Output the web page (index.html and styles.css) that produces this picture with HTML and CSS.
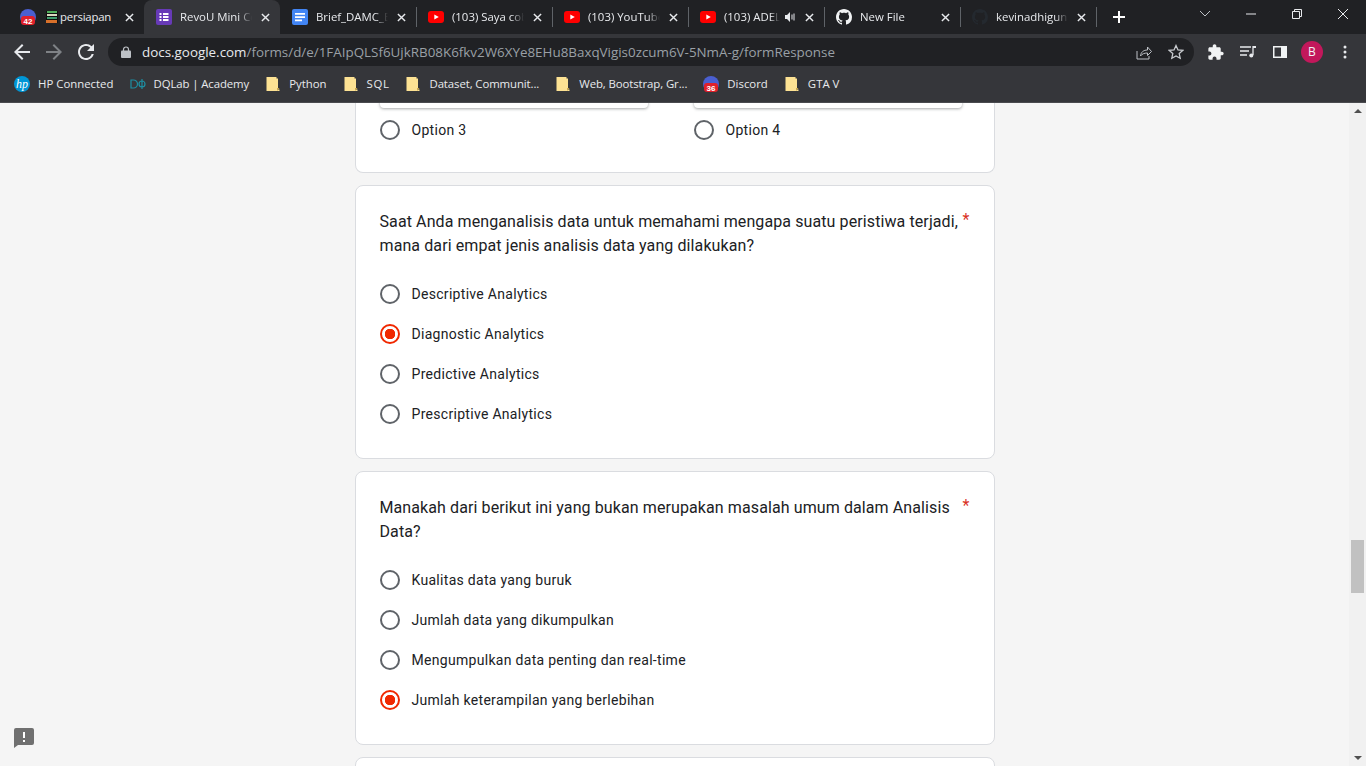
FILE: index.html
```html
<!DOCTYPE html>
<html>
<head>
    <title>RevoU Mini Course</title>
    <link rel="stylesheet" href="styles.css">
</head>
<body>
    <svg class="defs" width="0" height="0">
        <symbol id="ico-close" viewBox="0 0 10 10"><path d="M1 1l8 8M9 1L1 9" stroke="#e8eaed" stroke-width="1.6" fill="none"/></symbol>
        <symbol id="ico-yt" viewBox="0 0 16 12"><rect width="16" height="12" rx="3" fill="#f00"/><path d="M6.3 3.4v5.2L10.8 6z" fill="#fff"/></symbol>
        <symbol id="ico-gh" viewBox="0 0 16 16"><path d="M8 0C3.58 0 0 3.58 0 8c0 3.54 2.29 6.53 5.47 7.59.4.07.55-.17.55-.38 0-.19-.01-.82-.01-1.49-2.01.37-2.53-.49-2.69-.94-.09-.23-.48-.94-.82-1.13-.28-.15-.68-.52-.01-.53.63-.01 1.08.58 1.23.82.72 1.21 1.87.87 2.33.66.07-.52.28-.87.51-1.07-1.78-.2-3.64-.89-3.64-3.95 0-.87.31-1.59.82-2.15-.08-.2-.36-1.02.08-2.12 0 0 .67-.21 2.2.82.64-.18 1.32-.27 2-.27.68 0 1.36.09 2 .27 1.53-1.04 2.2-.82 2.2-.82.44 1.1.16 1.92.08 2.12.51.56.82 1.27.82 2.15 0 3.07-1.87 3.75-3.65 3.95.29.25.54.73.54 1.48 0 1.07-.01 1.93-.01 2.2 0 .21.15.46.55.38A8.013 8.013 0 0016 8c0-4.42-3.58-8-8-8z"/></symbol>
        <symbol id="ico-folder" viewBox="0 0 16 16"><path d="M1.500 1h10v1.500H13v11h1.500V15h-13z" fill="#fde293"/><path d="M12 12h2.500L12 15z" fill="#c9a84f"/></symbol>
    </svg>

    <div class="tabstrip">
        <div class="tab first">
            <svg class="fav" viewBox="0 0 16 16"><circle cx="8" cy="8" r="8" fill="#4a5fd0"/><rect x="1" y="7" width="14" height="9" rx="3" fill="#e0202a"/><text x="8" y="15" class="badge">42</text></svg>
            <svg class="fav-small" viewBox="0 0 12 12"><rect width="12" height="12" fill="#111"/><rect x="1" y="0" width="10" height="2" fill="#4fae5b"/><rect x="1" y="3" width="10" height="2" fill="#d9d9c0"/><rect x="1" y="6" width="10" height="2" fill="#3f9c6e"/><rect y="9" width="11" height="3" fill="#d8702a"/></svg>
            <span class="title">persiapan</span>
            <svg class="close"><use href="#ico-close"/></svg>
        </div>
        <div class="tab active">
            <svg class="fav" viewBox="0 0 16 16"><rect width="16" height="16" rx="2" fill="#673ab7"/><path d="M3.500 4h2v2h-2zM7 4h5.500v2H7zM3.500 7h2v2h-2zM7 7h5.500v2H7zM3.500 10h2v2h-2zM7 10h5.500v2H7z" fill="#fff"/></svg>
            <span class="title">RevoU Mini Course</span>
            <svg class="close"><use href="#ico-close"/></svg>
        </div>
        <div class="tab sep">
            <svg class="fav" viewBox="0 0 16 16"><rect width="16" height="16" rx="2" fill="#4285f4"/><path d="M3 4h10v1.800H3zM3 7.200h10V9H3zM3 10.400h7v1.800H3z" fill="#fff"/></svg>
            <span class="title">Brief_DAMC_Batch</span>
            <svg class="close"><use href="#ico-close"/></svg>
        </div>
        <div class="tab sep">
            <svg class="fav"><use href="#ico-yt" y="2" height="12" width="16"/></svg>
            <span class="title">(103) Saya coba</span>
            <svg class="close"><use href="#ico-close"/></svg>
        </div>
        <div class="tab sep">
            <svg class="fav"><use href="#ico-yt" y="2" height="12" width="16"/></svg>
            <span class="title">(103) YouTube</span>
            <svg class="close"><use href="#ico-close"/></svg>
        </div>
        <div class="tab sep">
            <svg class="fav"><use href="#ico-yt" y="2" height="12" width="16"/></svg>
            <span class="title">(103) ADELE</span>
            <svg class="audio" viewBox="0 0 12 12"><path d="M1 4h2l3-3v10L3 8H1z" fill="#e8eaed"/><path d="M8 3.500v5M10 2.500v7" stroke="#e8eaed" fill="none"/></svg>
            <svg class="close"><use href="#ico-close"/></svg>
        </div>
        <div class="tab sep">
            <svg class="fav gh-light"><use href="#ico-gh"/></svg>
            <span class="title">New File</span>
            <svg class="close"><use href="#ico-close"/></svg>
        </div>
        <div class="tab sep">
            <svg class="fav gh-dark"><use href="#ico-gh"/></svg>
            <span class="title">kevinadhigunawan</span>
            <svg class="close"><use href="#ico-close"/></svg>
        </div>
        <svg class="newtab" viewBox="0 0 12 12"><path d="M6 0v12M0 6h12" stroke="#fff" stroke-width="2"/></svg>
        <div class="winctl">
            <svg viewBox="0 0 46 16"><path d="M18 5l5 5 5-5" stroke="#bdc1c6" fill="none"/></svg>
            <svg viewBox="0 0 46 16"><path d="M18 8h10" stroke="#e8eaed" fill="none"/></svg>
            <svg viewBox="0 0 46 16"><path d="M18.500 5.500h7v7h-7zM20.500 5.500v-2h7v7h-2" stroke="#e8eaed" fill="none"/></svg>
            <svg viewBox="0 0 46 16"><path d="M18 3l10 10M28 3L18 13" stroke="#e8eaed" fill="none"/></svg>
        </div>
    </div>

    <div class="toolbar">
        <svg class="tool" viewBox="4 4 16 16"><path d="M20 11H7.830l5.590-5.590L12 4l-8 8 8 8 1.410-1.410L7.830 13H20v-2z" fill="#e8eaed"/></svg>
        <svg class="tool" viewBox="4 4 16 16"><path d="M12 4l-1.410 1.410L16.170 11H4v2h12.170l-5.580 5.590L12 20l8-8z" fill="#7f8286"/></svg>
        <svg class="tool" viewBox="4 4 16 16"><path d="M17.650 6.350A7.958 7.958 0 0012 4c-4.420 0-7.990 3.580-7.990 8s3.570 8 7.990 8c3.730 0 6.840-2.550 7.730-6h-2.080A5.990 5.990 0 0112 18c-3.310 0-6-2.690-6-6s2.690-6 6-6c1.660 0 3.140.690 4.220 1.780L13 11h7V4l-2.350 2.350z" fill="#e8eaed"/></svg>
        <div class="omnibox">
            <svg class="lock" viewBox="0 0 10 12"><path d="M2.500 5V3.500a2.500 2.500 0 0 1 5 0V5" stroke="#bdc1c6" stroke-width="1.200" fill="none"/><rect y="4.500" width="10" height="7.500" rx="1" fill="#bdc1c6"/></svg>
            <span class="url"><span class="host">docs.google.com</span>/forms/d/e/1FAIpQLSf6UjkRB08K6fkv2W6XYe8EHu8BaxqVigis0zcum6V-5NmA-g/formResponse</span>
            <svg class="omni-ico share" viewBox="0 0 16 16"><path d="M1 7v8h12v-3" stroke="#bdc1c6" fill="none"/><path d="M4.500 12c.5-4 3-6 7-6V3l4 4.500-4 4V9c-3 0-5.500.8-7 3z" stroke="#bdc1c6" fill="none"/></svg>
            <svg class="omni-ico star" viewBox="0 0 16 16"><path d="M8 1.500l2 4.400 4.800.5-3.600 3.200 1 4.700L8 11.900l-4.200 2.400 1-4.700L1.200 6.400 6 5.900z" stroke="#c8cbcf" stroke-width="1.300" fill="none"/></svg>
        </div>
        <svg class="tool" viewBox="1.500 0.500 22 22"><path d="M20.500 11H19V7c0-1.100-.9-2-2-2h-4V3.500C13 2.120 11.880 1 10.500 1S8 2.120 8 3.500V5H4c-1.100 0-1.990.9-1.990 2v3.800H3.500c1.490 0 2.700 1.210 2.700 2.700s-1.210 2.700-2.700 2.700H2V20c0 1.100.9 2 2 2h3.800v-1.500c0-1.490 1.210-2.700 2.700-2.700 1.490 0 2.700 1.210 2.700 2.700V22H17c1.100 0 2-.9 2-2v-4h1.500c1.380 0 2.500-1.120 2.500-2.500S21.880 11 20.500 11z" fill="#f1f3f4"/></svg>
        <svg class="tool" viewBox="0 0 16 16"><path d="M0 3h11M0 7h9M0 11h7" stroke="#e8eaed" stroke-width="1.300"/><path d="M13 2v9" stroke="#e8eaed" stroke-width="1.300"/><circle cx="11.300" cy="11.500" r="2" fill="#e8eaed"/><path d="M13 2h3v2h-3z" fill="#e8eaed"/></svg>
        <svg class="tool" viewBox="0 0 16 16"><rect x="1.750" y="2.750" width="12.500" height="10.500" stroke="#f1f3f4" stroke-width="1.500" fill="none"/><rect x="9" y="2" width="6" height="12" fill="#f1f3f4"/></svg>
        <div class="avatar">B</div>
        <svg class="tool dots" viewBox="0 0 4 14"><circle cx="2" cy="2" r="1.500" fill="#e8eaed"/><circle cx="2" cy="7" r="1.500" fill="#e8eaed"/><circle cx="2" cy="12" r="1.500" fill="#e8eaed"/></svg>
    </div>

    <div class="bookmarks">
        <div class="bm">
            <svg class="bm-ico" viewBox="0 0 16 16"><circle cx="8" cy="8" r="8" fill="#0096d6"/><text x="8" y="12" class="hp">hp</text></svg>
            <span>HP Connected</span>
        </div>
        <div class="bm">
            <svg class="bm-ico" viewBox="0 0 16 16"><path d="M1 4h2.500a4 4 0 0 1 0 8H1zM12 3v10M12 5a3 3 0 0 0 0 6 3 3 0 0 0 0-6z" stroke="#1d8fa3" stroke-width="1.200" fill="none"/></svg>
            <span class="tight">DQLab | Academy</span>
        </div>
        <div class="bm"><svg class="bm-ico"><use href="#ico-folder"/></svg><span>Python</span></div>
        <div class="bm"><svg class="bm-ico"><use href="#ico-folder"/></svg><span class="wide">SQL</span></div>
        <div class="bm"><svg class="bm-ico"><use href="#ico-folder"/></svg><span class="tight">Dataset, Communit...</span></div>
        <div class="bm"><svg class="bm-ico"><use href="#ico-folder"/></svg><span class="tight">Web, Bootstrap, Gr...</span></div>
        <div class="bm">
            <svg class="bm-ico" viewBox="0 0 16 16"><circle cx="8" cy="8" r="8" fill="#4a5fd0"/><rect x="1" y="7" width="14" height="9" rx="3" fill="#e0202a"/><text x="8" y="15" class="badge">36</text></svg>
            <span>Discord</span>
        </div>
        <div class="bm"><svg class="bm-ico"><use href="#ico-folder"/></svg><span>GTA V</span></div>
    </div>

    <div class="viewport">
        <div class="page">
            <div class="card cut">
                <div class="img-grid">
                    <div class="img-col">
                        <div class="img-tile"></div>
                        <div class="opt"><span class="radio"></span><span>Option 3</span></div>
                    </div>
                    <div class="img-col">
                        <div class="img-tile"></div>
                        <div class="opt"><span class="radio"></span><span>Option 4</span></div>
                    </div>
                </div>
            </div>

            <div class="card">
                <div class="question">
                    <div class="q-text">Saat Anda menganalisis data untuk memahami mengapa suatu peristiwa terjadi, mana dari empat jenis analisis data yang dilakukan?</div>
                    <span class="req">*</span>
                </div>
                <div class="opt"><span class="radio"></span><span>Descriptive Analytics</span></div>
                <div class="opt"><span class="radio on"></span><span>Diagnostic Analytics</span></div>
                <div class="opt"><span class="radio"></span><span>Predictive Analytics</span></div>
                <div class="opt"><span class="radio"></span><span>Prescriptive Analytics</span></div>
            </div>

            <div class="card">
                <div class="question">
                    <div class="q-text">Manakah dari berikut ini yang bukan merupakan masalah umum dalam Analisis Data?</div>
                    <span class="req">*</span>
                </div>
                <div class="opt"><span class="radio"></span><span>Kualitas data yang buruk</span></div>
                <div class="opt"><span class="radio"></span><span>Jumlah data yang dikumpulkan</span></div>
                <div class="opt"><span class="radio"></span><span>Mengumpulkan data penting dan real-time</span></div>
                <div class="opt"><span class="radio on"></span><span>Jumlah keterampilan yang berlebihan</span></div>
            </div>

            <div class="card"></div>
        </div>

        <div class="scrollbar">
            <div class="arrow up"></div>
            <div class="thumb"></div>
            <div class="arrow down"></div>
        </div>

        <svg class="feedback" viewBox="0 0 20 20"><path d="M2 0h16a2 2 0 0 1 2 2v13a2 2 0 0 1-2 2H4l-4 3V2a2 2 0 0 1 2-2z" fill="#707070"/><path d="M9 4h2v6H9zM9 12h2v2H9z" fill="#fff"/></svg>
    </div>
</body>
</html>
```

FILE: styles.css
```css
html, body {
    margin: 0;
    padding: 0;
    height: 100%;
    overflow: hidden;
}
body {
    display: flex;
    flex-direction: column;
    font-family: "Open Sans", "Noto Sans", sans-serif;
    background-color: #f5f5f5;
}
.defs {
    position: absolute;
}

/* browser tabs */
.tabstrip {
    height: 34px;
    flex: none;
    display: flex;
    align-items: center;
    padding-left: 8px;
    background-color: #202124;
}
.tab {
    width: 136px;
    height: 34px;
    box-sizing: border-box;
    flex: none;
    position: relative;
    display: flex;
    align-items: center;
    padding: 0 10px 0 12px;
    font-size: 11.4px;
    color: #e8eaed;
}
.tab.sep::after {
    content: "";
    position: absolute;
    right: -1px;
    top: 7px;
    width: 1px;
    height: 20px;
    background-color: #5f6368;
}
.tab.active {
    background-color: #35363a;
    border-radius: 8px 8px 0 0;
}
.fav {
    width: 16px;
    height: 16px;
    flex: none;
    margin-right: 8px;
}
.fav-small {
    width: 12px;
    height: 12px;
    flex: none;
    margin: 0 2px;
}
.gh-light {
    fill: #f1f3f4;
}
.gh-dark {
    fill: #24292f;
}
.title {
    flex: 1;
    min-width: 0;
    margin-bottom: 2px;
    white-space: nowrap;
    overflow: hidden;
    -webkit-mask-image: linear-gradient(to right, #000 82%, transparent 100%);
    mask-image: linear-gradient(to right, #000 82%, transparent 100%);
}
.first .title {
    letter-spacing: -0.2px;
    -webkit-mask-image: none;
    mask-image: none;
}
.close {
    width: 9px;
    height: 9px;
    flex: none;
    margin-left: 9px;
}
.audio {
    width: 12px;
    height: 12px;
    flex: none;
    margin-left: 4px;
}
.newtab {
    width: 12px;
    height: 12px;
    margin-left: 17px;
    flex: none;
}
.winctl {
    margin-left: auto;
    align-self: flex-start;
    display: flex;
    height: 28px;
    align-items: center;
}
.winctl svg {
    width: 46px;
    height: 16px;
    display: block;
}

/* address bar */
.toolbar {
    height: 32px;
    flex: none;
    display: flex;
    align-items: center;
    padding: 2px 0 0 14px;
    background-color: #35363a;
}
.tool {
    width: 16px;
    height: 16px;
    flex: none;
    margin-right: 16px;
}
.omnibox {
    width: 1086px;
    height: 28px;
    box-sizing: border-box;
    flex: none;
    display: flex;
    align-items: center;
    margin: 0 14px 0 -2px;
    padding-left: 13px;
    border-radius: 14px;
    background-color: #202124;
    font-size: 13.4px;
    color: #9aa0a6;
}
.lock {
    width: 10px;
    height: 12px;
    margin-right: 11px;
    flex: none;
}
.host {
    color: #e8eaed;
}
.url {
    flex: 1;
    white-space: nowrap;
    overflow: hidden;
}
.omni-ico {
    width: 16px;
    height: 16px;
    flex: none;
}
.omni-ico.star {
    margin: 0 10px 0 16px;
}
.avatar {
    width: 22px;
    height: 22px;
    flex: none;
    margin: 0 20px 0 -3px;
    border-radius: 50%;
    background-color: #c2185b;
    color: #f1f3f4;
    font-size: 12px;
    line-height: 22px;
    text-align: center;
}
.tool.dots {
    width: 4px;
    height: 14px;
    margin: 0;
}

/* bookmarks */
.bookmarks {
    height: 32px;
    flex: none;
    display: flex;
    align-items: center;
    padding: 0 0 2px 6px;
    border-bottom: 1px solid #4a4b4f;
    background-color: #35363a;
    font-size: 11.4px;
    color: #e8eaed;
}
.bm {
    display: flex;
    align-items: center;
    gap: 8px;
    padding: 0 8px;
    white-space: nowrap;
}
.bm span {
    margin-bottom: 2px;
}
.bm .wide {
    letter-spacing: 0.6px;
}
.bm .tight {
    letter-spacing: -0.1px;
}
.bm-ico {
    width: 16px;
    height: 16px;
    flex: none;
}
.badge {
    font-family: "Liberation Sans", sans-serif;
    font-size: 8px;
    font-weight: bold;
    fill: #fff;
    text-anchor: middle;
}
.hp {
    font-family: "Liberation Serif", serif;
    font-size: 12px;
    font-style: italic;
    fill: #fff;
    text-anchor: middle;
}

/* form */
.viewport {
    flex: 1;
    min-height: 0;
    display: flex;
    position: relative;
    overflow: hidden;
}
.page {
    flex: 1;
    min-width: 0;
    display: flex;
    flex-direction: column;
    align-items: center;
    gap: 12px;
    font-family: Roboto, sans-serif;
    color: #202124;
}
.card {
    width: 640px;
    height: 274px;
    box-sizing: border-box;
    flex: none;
    padding: 24px 24px;
    border: 1px solid #dadce0;
    border-radius: 8px;
    background-color: #fff;
}
.card.cut {
    height: 90px;
    margin-top: -20px;
    padding: 0 24px;
    border-top: none;
    border-radius: 0 0 8px 8px;
}
.img-grid {
    display: flex;
    gap: 46px;
}
.img-col {
    width: 268px;
}
.img-tile {
    height: 25px;
    margin-bottom: 2px;
    border-radius: 0 0 4px 4px;
    background-color: #fff;
    box-shadow: 0 1px 3px rgba(60, 64, 67, 0.45);
}
.question {
    display: flex;
    justify-content: space-between;
    gap: 3px;
    margin-bottom: 16px;
    font-size: 16px;
    line-height: 24px;
    letter-spacing: 0.1px;
}
.q-text {
    flex: 1;
}
.req {
    margin-top: -2px;
    color: #d93025;
}
.opt {
    height: 40px;
    display: flex;
    align-items: center;
    gap: 12px;
    font-size: 14px;
    letter-spacing: 0.3px;
}
.radio {
    width: 20px;
    height: 20px;
    box-sizing: border-box;
    flex: none;
    border: 2px solid #5f6368;
    border-radius: 50%;
}
.radio.on {
    border-color: #f02800;
    background: radial-gradient(circle, #f02800 0, #f02800 5px, transparent 5.5px);
}

/* page scrollbar */
.scrollbar {
    width: 17px;
    flex: none;
    display: flex;
    flex-direction: column;
    align-items: center;
    background-color: #f1f1f1;
}
.thumb {
    width: 13px;
    height: 53px;
    margin-top: 427px;
    align-self: flex-start;
    margin-left: 2px;
    background-color: #c1c1c1;
}
.arrow {
    width: 0;
    height: 0;
    border-left: 4px solid transparent;
    border-right: 4px solid transparent;
}
.arrow.up {
    margin-top: 6px;
    border-bottom: 4px solid #505050;
}
.arrow.down {
    margin-top: auto;
    margin-bottom: 6px;
    border-top: 4px solid #505050;
}
.feedback {
    position: absolute;
    left: 14px;
    bottom: 18px;
    width: 20px;
    height: 20px;
}
```
